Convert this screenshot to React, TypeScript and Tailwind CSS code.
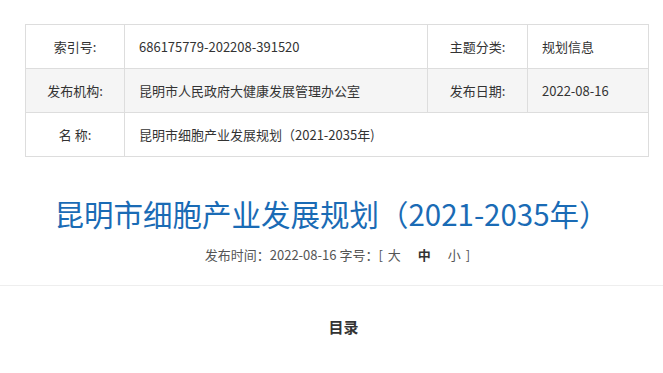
const FONT = "font-['Microsoft_YaHei','Noto_Sans_CJK_SC','Open_Sans',sans-serif]";

const cell = "border border-[#dddddd] h-[44px] text-[13px] text-[#333333]";

export default function App() {
  return (
    <div className={`${FONT} bg-white w-[663px] h-[373px] overflow-hidden`}>
      <div className="pt-[24px] px-[25px]">
        <table className="w-[624px] border-collapse table-fixed">
          <colgroup>
            <col className="w-[99px]" />
            <col className="w-[303px]" />
            <col className="w-[100px]" />
            <col />
          </colgroup>
          <tbody>
            <tr>
              <td className={`${cell} text-center`}>索引号:</td>
              <td className={`${cell} pl-[14px]`}>686175779-202208-391520</td>
              <td className={`${cell} text-center`}>主题分类:</td>
              <td className={`${cell} pl-[14px]`}>规划信息</td>
            </tr>
            <tr className="bg-[#f5f5f5]">
              <td className={`${cell} text-center`}>发布机构:</td>
              <td className={`${cell} pl-[14px]`}>昆明市人民政府大健康发展管理办公室</td>
              <td className={`${cell} text-center`}>发布日期:</td>
              <td className={`${cell} pl-[14px]`}>2022-08-16</td>
            </tr>
            <tr>
              <td className={`${cell} text-center`}>名 称:</td>
              <td className={`${cell} pl-[14px]`} colSpan={3}>
                昆明市细胞产业发展规划（2021-2035年)
              </td>
            </tr>
          </tbody>
        </table>
      </div>

      <h1 className="mt-[36px] text-center text-[29.5px] leading-[40px] text-[#1a6bb5]">
        昆明市细胞产业发展规划（2021-2035年）
      </h1>
      <div className="mt-[12px] pl-[12px] text-center text-[13px] leading-[20px] text-[#555555]">
        发布时间：2022-08-16 字号：[
        <span className="ml-[5px] cursor-pointer">大</span>
        <span className="mx-[17px] font-bold text-[#333333] cursor-pointer">中</span>
        <span className="mr-[5px] cursor-pointer">小</span>
        ]
      </div>

      <div className="mt-[20px] border-t border-[#eeeeee]" />

      <div className="mt-[30px] pl-[24px] text-center text-[15px] font-bold text-[#333333]">目录</div>
    </div>
  );
}
